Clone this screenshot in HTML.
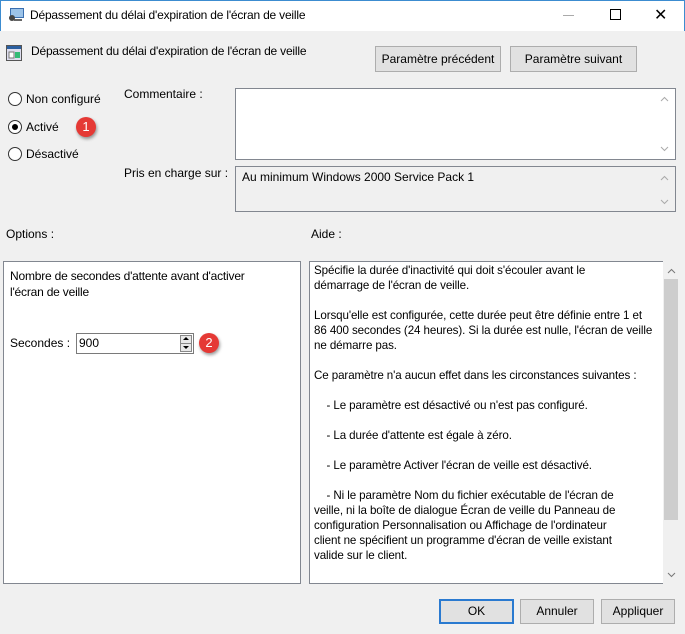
<!DOCTYPE html>
<html><head><meta charset="utf-8"><style>
*{box-sizing:border-box;margin:0;padding:0}
body{width:685px;height:634px;background:#f0f0f0;font-family:"Liberation Sans",sans-serif;font-size:12px;color:#000;position:relative;overflow:hidden}
.a{position:absolute;white-space:nowrap}
.btn{position:absolute;background:#e1e1e1;border:1px solid #adadad;text-align:center;font-size:12px}
.box{position:absolute;border:1px solid #828790;background:#fff}
.radio{position:absolute;width:14px;height:14px;border:1px solid #333;border-radius:50%;background:#fff}
.badge{position:absolute;width:20px;height:20px;border-radius:50%;background:#e53935;color:#fff;font-size:13px;text-align:center;line-height:20px;box-shadow:1px 2px 3px rgba(0,0,0,.4)}
.up,.dn{position:absolute;width:9px;height:6px}
</style></head><body>
<div class="a" style="left:0;top:0;width:685px;height:31px;background:#fff;border-top:1px solid #3c8cd0;border-left:1px solid #3c8cd0;border-right:1px solid #3c8cd0"></div>
<svg class="a" style="left:8px;top:7px" width="18" height="16"><rect x="2" y="1" width="14" height="10" fill="#3a6fb0"/><rect x="3" y="2" width="12" height="8" fill="#9cc3e8"/><rect x="6" y="12" width="8" height="2" fill="#666"/><circle cx="4" cy="11" r="3" fill="#444"/></svg>
<div class="a" style="left:30px;top:8px;font-size:12px;letter-spacing:-0.2px">Dépassement du délai d'expiration de l'écran de veille</div>
<div class="a" style="left:563px;top:15px;width:11px;height:1px;background:#aaa"></div>
<div class="a" style="left:610px;top:9px;width:11px;height:11px;border:1px solid #000"></div>
<div class="a" style="left:654px;top:5px;font-size:16px">✕</div>
<svg class="a" style="left:6px;top:45px" width="16" height="16"><rect x="0.5" y="0.5" width="15" height="15" fill="#dde" stroke="#555"/><rect x="1" y="1" width="14" height="3" fill="#2b5fa0"/><rect x="3" y="7" width="5" height="6" fill="#fff" stroke="#777"/><rect x="9" y="7" width="5" height="6" fill="#3b7"/></svg>
<div class="a" style="left:31px;top:44px;letter-spacing:-0.2px">Dépassement du délai d'expiration de l'écran de veille</div>
<div class="btn" style="left:375px;top:46px;width:126px;height:26px;line-height:24px">Paramètre précédent</div>
<div class="btn" style="left:510px;top:46px;width:127px;height:26px;line-height:24px">Paramètre suivant</div>
<div class="radio" style="left:8px;top:92px"></div><div class="a" style="left:26px;top:92px">Non configuré</div>
<div class="radio" style="left:8px;top:120px"></div><div class="a" style="left:12px;top:124px;width:6px;height:6px;border-radius:50%;background:#000"></div><div class="a" style="left:26px;top:120px">Activé</div>
<div class="radio" style="left:8px;top:147px"></div><div class="a" style="left:26px;top:147px">Désactivé</div>
<div class="badge" style="left:76px;top:117px">1</div>
<div class="a" style="left:124px;top:87px">Commentaire :</div>
<div class="box" style="left:235px;top:88px;width:441px;height:72px"></div>
<svg class="up" style="left:660px;top:96px" viewBox="0 0 9 6"><path d="M1 5L4.5 1.5L8 5" fill="none" stroke="#aaa"/></svg>
<svg class="dn" style="left:660px;top:146px" viewBox="0 0 9 6"><path d="M1 1L4.5 4.5L8 1" fill="none" stroke="#aaa"/></svg>
<div class="a" style="left:124px;top:166px">Pris en charge sur :</div>
<div class="a" style="left:235px;top:166px;width:441px;height:46px;border:1px solid #828790;background:#f0f0f0"></div>
<div class="a" style="left:242px;top:170px">Au minimum Windows 2000 Service Pack 1</div>
<svg class="up" style="left:660px;top:175px" viewBox="0 0 9 6"><path d="M1 5L4.5 1.5L8 5" fill="none" stroke="#aaa"/></svg>
<svg class="dn" style="left:660px;top:199px" viewBox="0 0 9 6"><path d="M1 1L4.5 4.5L8 1" fill="none" stroke="#aaa"/></svg>
<div class="a" style="left:6px;top:227px">Options :</div>
<div class="a" style="left:311px;top:227px">Aide :</div>
<div class="box" style="left:3px;top:261px;width:298px;height:323px"></div>
<div class="a" style="left:10px;top:268px;line-height:16px;letter-spacing:-0.2px">Nombre de secondes d'attente avant d'activer<br>l'écran de veille</div>
<div class="a" style="left:10px;top:336px">Secondes :</div>
<div class="a" style="left:76px;top:333px;width:118px;height:21px;border:1px solid #7a7a7a;background:#fff"></div>
<div class="a" style="left:79px;top:336px">900</div>
<div class="a" style="left:180px;top:335px;width:12px;height:17px;border:1px solid #888;background:#e8e8e8"></div>
<div class="a" style="left:180px;top:343px;width:12px;height:1px;background:#888"></div>
<div class="a" style="left:183px;top:337px;border:3px solid transparent;border-bottom:3px solid #000;border-top:0;"></div>
<div class="a" style="left:183px;top:346px;border:3px solid transparent;border-top:3px solid #000;border-bottom:0;"></div>
<div class="badge" style="left:199px;top:333px">2</div>
<div class="box" style="left:309px;top:261px;width:355px;height:323px"></div>
<div class="a" style="left:663px;top:261px;width:16px;height:323px;background:#f0f0f0"></div>
<div class="a" style="left:664px;top:279px;width:14px;height:241px;background:#cdcdcd"></div>
<svg class="up" style="left:667px;top:268px" viewBox="0 0 9 6"><path d="M1 5L4.5 1.5L8 5" fill="none" stroke="#777"/></svg>
<svg class="dn" style="left:667px;top:572px" viewBox="0 0 9 6"><path d="M1 1L4.5 4.5L8 1" fill="none" stroke="#777"/></svg>
<div class="a" style="left:314px;top:263px;line-height:15px;white-space:pre;font-size:11.6px;letter-spacing:-0.1px">Spécifie la durée d'inactivité qui doit s'écouler avant le
démarrage de l'écran de veille.

Lorsqu'elle est configurée, cette durée peut être définie entre 1 et
86 400 secondes (24 heures). Si la durée est nulle, l'écran de veille
ne démarre pas.

Ce paramètre n'a aucun effet dans les circonstances suivantes :

    - Le paramètre est désactivé ou n'est pas configuré.

    - La durée d'attente est égale à zéro.

    - Le paramètre Activer l'écran de veille est désactivé.

    - Ni le paramètre Nom du fichier exécutable de l'écran de
veille, ni la boîte de dialogue Écran de veille du Panneau de
configuration Personnalisation ou Affichage de l'ordinateur
client ne spécifient un programme d'écran de veille existant
valide sur le client.</div>
<div class="btn" style="left:439px;top:599px;width:75px;height:25px;line-height:21px;border:2px solid #2a7ad0">OK</div>
<div class="btn" style="left:520px;top:599px;width:74px;height:25px;line-height:23px">Annuler</div>
<div class="btn" style="left:601px;top:599px;width:74px;height:25px;line-height:23px">Appliquer</div>
</body></html>
